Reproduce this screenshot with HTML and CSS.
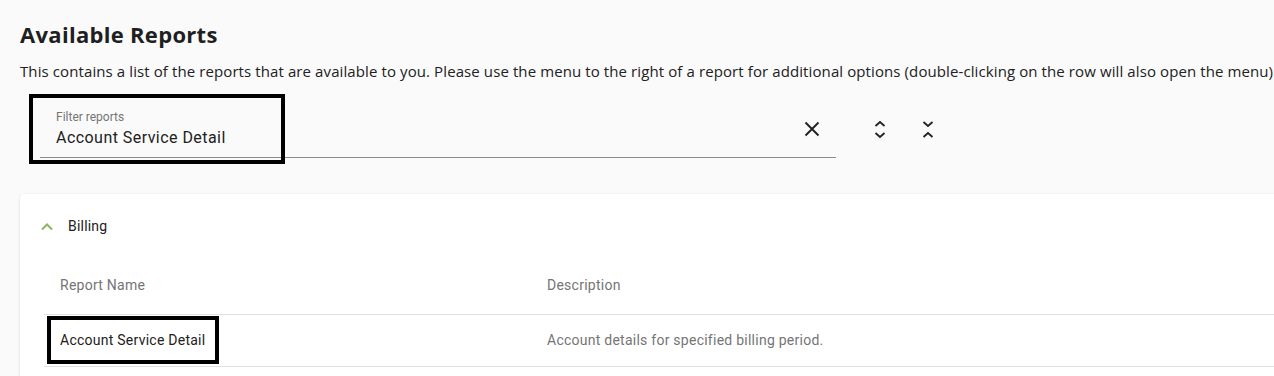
FILE: index.html
```html
<!DOCTYPE html>
<html>
<head>
<meta charset="utf-8">
<link rel="stylesheet" href="styles.css">
</head>
<body>
<div class="page">
  <h1 class="title">Available Reports</h1>
  <p class="intro">This contains a list of the reports that are available to you. Please use the menu to the right of a report for additional options (double-clicking on the row will also open the menu)</p>

  <div class="filter-row">
    <div class="field">
      <div class="field-label">Filter reports</div>
      <div class="field-value">Account Service Detail</div>
      <div class="highlight hl-field"></div>
    </div>
    <button class="icon-btn clear" aria-label="Clear">
      <svg width="24" height="24" viewBox="0 0 24 24"><path d="M5.5 5.5 L18.5 18.5 M18.5 5.5 L5.5 18.5" stroke="#212121" stroke-width="1.9" fill="none"/></svg>
    </button>
    <button class="icon-btn expand" aria-label="Expand all">
      <svg width="24" height="24" viewBox="0 0 24 24"><path d="M7.5 9 L12 5 L16.5 9 M7.5 16 L12 20 L16.5 16" stroke="#212121" stroke-width="1.8" fill="none"/></svg>
    </button>
    <button class="icon-btn collapse" aria-label="Collapse all">
      <svg width="24" height="24" viewBox="0 0 24 24"><path d="M7.5 5 L12 9 L16.5 5 M7.5 20 L12 16 L16.5 20" stroke="#212121" stroke-width="1.8" fill="none"/></svg>
    </button>
  </div>

  <div class="card">
    <div class="panel-header">
      <svg class="chev" width="14" height="10" viewBox="0 0 14 10"><path d="M2 7.5 L7 2.5 L12 7.5" stroke="#8cb85c" stroke-width="2" fill="none"/></svg>
      <span class="panel-title">Billing</span>
    </div>
    <table class="reports">
      <thead>
        <tr><th class="c-name">Report Name</th><th class="c-desc">Description</th></tr>
      </thead>
      <tbody>
        <tr><td class="c-name name-cell"><span>Account Service Detail</span><div class="highlight hl-cell"></div></td><td class="c-desc desc">Account details for specified billing period.</td></tr>
      </tbody>
    </table>
  </div>
</div>
</body>
</html>
```

FILE: styles.css
```css
html, body {
  margin: 0;
  padding: 0;
  background: #fafafa;
  overflow: hidden;
}
.page {
  width: 1320px;
  padding: 20px 0 0 20px;
  box-sizing: border-box;
}
.title {
  margin: 0;
  font-family: "Open Sans", "Noto Sans", sans-serif;
  font-weight: 700;
  font-size: 22px;
  line-height: 28px;
  letter-spacing: 0.3px;
  color: #1f1f1f;
}
.intro {
  margin: 13px 0 0 0;
  font-family: "Open Sans", "Noto Sans", sans-serif;
  font-size: 15px;
  line-height: 20px;
  letter-spacing: 0.1px;
  color: #212121;
  white-space: nowrap;
}
.filter-row {
  display: flex;
  align-items: center;
  margin: 19px 0 0 20px;
}
.field {
  position: relative;
  width: 796px;
  box-sizing: border-box;
  padding: 9px 16px 9px 16px;
  border-bottom: 1px solid #8c8c8c;
  font-family: Roboto, sans-serif;
}
.field-label {
  font-size: 12px;
  line-height: 16px;
  color: #757575;
}
.field-value {
  margin-top: 3px;
  font-size: 16px;
  line-height: 20px;
  letter-spacing: 0.45px;
  color: #212121;
}
.icon-btn {
  width: 24px;
  height: 24px;
  padding: 0;
  border: 0;
  background: none;
  display: flex;
}
.clear { margin-left: -36px; }
.expand { margin-left: 44px; }
.collapse { margin-left: 24px; }
.highlight {
  position: absolute;
  border: 4px solid #000;
  box-sizing: border-box;
  pointer-events: none;
}
.hl-field {
  left: -11px;
  top: -6px;
  width: 256px;
  height: 70px;
}
.card {
  margin-top: 36px;
  background: #fff;
  border-radius: 4px;
  box-shadow: 0 1px 3px rgba(0,0,0,0.12), 0 0 1px rgba(0,0,0,0.08);
  padding-bottom: 20px;
}
.panel-header {
  height: 64px;
  display: flex;
  align-items: center;
  padding-left: 20px;
  font-family: Roboto, sans-serif;
}
.chev { display: block; margin-top: 1px; }
.panel-title {
  margin-left: 14px;
  margin-top: 0;
  font-size: 14px;
  letter-spacing: 0.2px;
  color: #212121;
}
.reports {
  margin-left: 24px;
  width: calc(100% - 24px);
  border-collapse: collapse;
  font-family: Roboto, sans-serif;
  font-size: 14px;
  letter-spacing: 0.25px;
}
.reports th, .reports td {
  text-align: left;
  padding: 0 0 2px 16px;
  border-bottom: 1px solid #e0e0e0;
}
.reports th {
  height: 54px;
  font-weight: 400;
  color: #757575;
}
.reports td {
  height: 49px;
}
.c-name { width: 471px; }
.name-cell {
  position: relative;
  color: #212121;
}
.desc { color: #757575; }
.hl-cell {
  left: 3px;
  top: 1px;
  width: 172px;
  height: 48px;
}
```
